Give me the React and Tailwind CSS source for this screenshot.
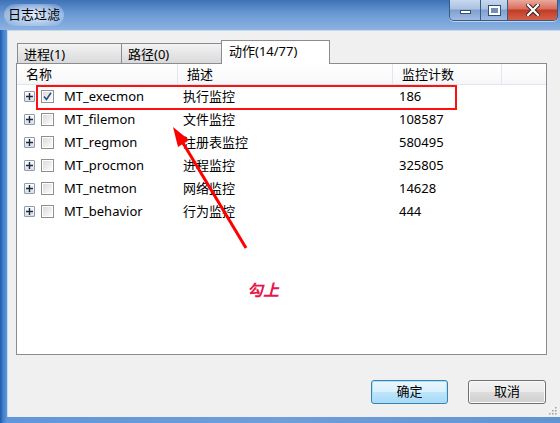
import React from "react";

const ROWS = [
  { name: "MT_execmon", desc: "执行监控", count: "186", checked: true },
  { name: "MT_filemon", desc: "文件监控", count: "108587" },
  { name: "MT_regmon", desc: "注册表监控", count: "580495" },
  { name: "MT_procmon", desc: "进程监控", count: "325805" },
  { name: "MT_netmon", desc: "网络监控", count: "14628" },
  { name: "MT_behavior", desc: "行为监控", count: "444" },
];

const FONT = { fontFamily: '"Noto Sans", "Noto Sans CJK SC", sans-serif' };

function PlusBox() {
  return (
    <div className="w-[11px] h-[11px] border border-[#8e9bb0] rounded-[1px] bg-[linear-gradient(to_bottom,#ffffff,#d9dfe8)] flex items-center justify-center">
      <svg width="7" height="7" viewBox="0 0 7 7">
        <path d="M0 3.5h7M3.5 0v7" stroke="#1f2b3d" strokeWidth="1.4" />
      </svg>
    </div>
  );
}

function CheckBox({ checked }) {
  return (
    <div className="w-[13px] h-[13px] border border-[#8f8f8f] bg-white p-[1px]">
      <div className="w-full h-full bg-[linear-gradient(135deg,#dcdcdc,#fbfbfb)] flex items-center justify-center">
        {checked && (
          <svg width="9" height="9" viewBox="0 0 9 9">
            <path d="M1 4.5 L3.5 7.5 L8 0.8" fill="none" stroke="#2a4c86" strokeWidth="1.6" />
          </svg>
        )}
      </div>
    </div>
  );
}

function Tab({ label, active, width }) {
  if (active) {
    return (
      <div
        className={`relative z-10 h-[24px] -mb-px -ml-px bg-white border border-b-0 border-[#898c95] pl-[7px] pt-[1px] text-[13px] text-black ${width}`}
      >
        {label}
      </div>
    );
  }
  return (
    <div
      className={`h-[20px] -ml-px first:ml-0 bg-[linear-gradient(to_bottom,#f3f3f3,#e6e6e6_50%,#d9d9d9)] border border-b-0 border-[#898c95] pl-[6px] text-[13px] leading-[20px] text-black ${width}`}
    >
      {label}
    </div>
  );
}

function CaptionButtons() {
  return (
    <div className="flex h-[21px] mr-[2px] border border-t-0 border-[#3b5a82] rounded-b-[5px] overflow-hidden shadow-[0_1px_0_rgba(255,255,255,0.5)]">
      <div className="w-[31px] bg-[linear-gradient(to_bottom,#c8d9ee,#a9c2e2_45%,#7e9fcf_50%,#9fbbe2)] border-r border-[#3b5a82] flex items-center justify-center pt-[4px]">
        <div className="w-[11px] h-[4px] bg-white border border-[#3a4e6c]" />
      </div>
      <div className="w-[27px] bg-[linear-gradient(to_bottom,#c8d9ee,#a9c2e2_45%,#7e9fcf_50%,#9fbbe2)] border-r border-[#3b5a82] flex items-center justify-center">
        <div className="w-[11px] h-[9px] border-[2px] border-white outline outline-1 outline-[#3a4e6c] bg-[#6f8fbf]" />
      </div>
      <div className="w-[49px] bg-[linear-gradient(to_bottom,#e9a99c,#d86d5c_45%,#c23b27_50%,#d5604a)] flex items-center justify-center">
        <svg width="14" height="12" viewBox="0 0 14 12">
          <path d="M2 1 L12 11 M12 1 L2 11" stroke="#3a2020" strokeWidth="4.2" strokeLinecap="square" />
          <path d="M2 1 L12 11 M12 1 L2 11" stroke="#ffffff" strokeWidth="2.2" strokeLinecap="square" />
        </svg>
      </div>
    </div>
  );
}

export default function App() {
  return (
    <div
      className="relative w-[560px] h-[423px] overflow-hidden flex flex-col bg-[linear-gradient(to_right,#1f58a6,#3f7fcc_3px,#5f97da_7px,#6d9fd9_50%,#5f95d4)]"
      style={FONT}
    >
      {/* title bar */}
      <div className="h-[30px] flex items-start justify-between bg-[linear-gradient(to_bottom,#3e72b8,#6a98d2_45%,#8cb3e2)]">
        <div className="ml-[4px] mt-[4px] px-[4px] h-[22px] flex items-center text-[13px] text-black rounded-full bg-[radial-gradient(ellipse_at_center,rgba(235,243,252,0.95),rgba(200,220,243,0.6)_60%,rgba(160,195,235,0)_100%)]">
          日志过滤
        </div>
        <CaptionButtons />
      </div>

      {/* client area */}
      <div className="flex-1 flex pl-[7px] pb-[6px]">
        <div className="relative flex-1 bg-[#f0f0f0] border-l border-t border-[#c9d8ea] flex flex-col">
          <div className="ml-[8px] mt-[9px] w-[531px] flex flex-col">
            {/* tabs */}
            <div className="flex items-end h-[23px] pl-[1px]">
              <Tab label="进程(1)" width="w-[105px]" />
              <Tab label="路径(0)" width="w-[101px]" />
              <Tab label="动作(14/77)" width="w-[109px]" active />
            </div>

            {/* list */}
            <div className="h-[292px] bg-white border border-[#898c95] text-[13px] text-black">
              <div className="flex h-[21px] bg-[linear-gradient(to_bottom,#ffffff,#f6f7f9)] border-b border-[#e2e5ea]">
                <div className="w-[161px] border-r border-[#e3e6ea] pl-[9px] leading-[20px]">名称</div>
                <div className="w-[215px] border-r border-[#e3e6ea] pl-[9px] leading-[20px]">描述</div>
                <div className="w-[109px] border-r border-[#e3e6ea] pl-[9px] leading-[20px]">监控计数</div>
                <div className="flex-1" />
              </div>
              {ROWS.map((r) => (
                <div key={r.name} className="flex h-[23px] items-center">
                  <div className="w-[161px] flex items-center pl-[7px]">
                    <PlusBox />
                    <div className="ml-[6px]">
                      <CheckBox checked={r.checked} />
                    </div>
                    <span className="ml-[10px] text-[13px]">{r.name}</span>
                  </div>
                  <div className="w-[215px] pl-[5px]">{r.desc}</div>
                  <div className="w-[109px] pl-[6px] text-[13px]">{r.count}</div>
                </div>
              ))}
            </div>
          </div>

          {/* buttons */}
          <div className="flex justify-end gap-[20px] mt-[25px] mr-[14px]">
            <button className="w-[77px] h-[24px] rounded-[3px] border border-[#3c7fb1] shadow-[inset_0_0_0_1px_#a8e2f7] bg-[linear-gradient(to_bottom,#eaf6fd,#d9f0fc_50%,#bee6fd_50%,#a7d9f5)] text-[13px] text-black">
              确定
            </button>
            <button className="w-[78px] h-[24px] rounded-[3px] border border-[#707070] shadow-[inset_0_0_0_1px_#fbfbfb] bg-[linear-gradient(to_bottom,#f2f2f2,#ebebeb_50%,#dddddd_50%,#cfcfcf)] text-[13px] text-black">
              取消
            </button>
          </div>

          {/* resize grip */}
          <svg className="absolute right-[3px] bottom-[2px]" width="10" height="10" viewBox="0 0 10 10">
            {[[8, 2], [8, 5], [5, 5], [8, 8], [5, 8], [2, 8]].map(([x, y]) => (
              <rect key={`${x}-${y}`} x={x} y={y} width="1.5" height="1.5" fill="#a0a0a0" />
            ))}
          </svg>
        </div>
      </div>

      {/* annotation: red box */}
      <div className="absolute left-[36px] top-[85px] w-[421px] h-[25px] border-2 border-[#ff1010]" />

      {/* annotation: arrow */}
      <svg className="absolute left-0 top-0 pointer-events-none" width="560" height="423">
        <line x1="246" y1="248" x2="183" y2="143" stroke="#ff0000" strokeWidth="3" />
        <polygon points="173,127 189,140 178,147" fill="#ff0000" />
      </svg>

      {/* annotation: label */}
      <div className="absolute left-[247px] top-[278px] text-[16px] italic font-semibold text-[#e8174a]">勾上</div>
    </div>
  );
}
